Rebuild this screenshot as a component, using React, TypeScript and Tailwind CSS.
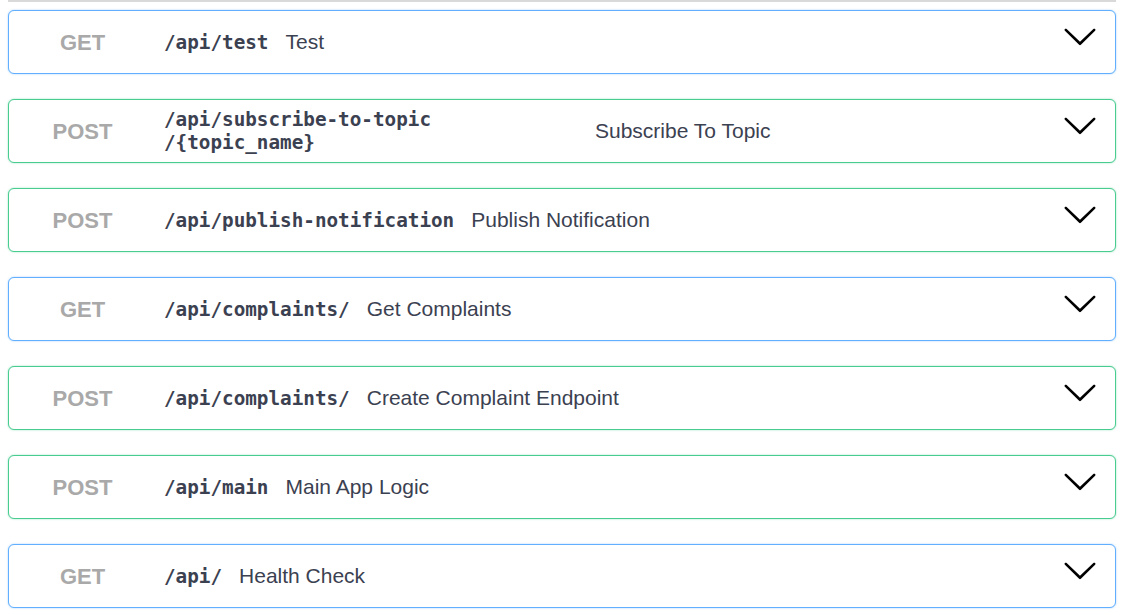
import React from 'react';

// Operation rows as shown in the collapsed API listing
interface Operation {
  method: 'GET' | 'POST';
  path: React.ReactNode;
  summary: string;
  pathWidth?: string;
}

const operations: Operation[] = [
  { method: 'GET', path: '/api/test', summary: 'Test' },
  {
    method: 'POST',
    path: (
      <>
        /api/subscribe-to-topic
        <br />
        /&#123;topic_name&#125;
      </>
    ),
    summary: 'Subscribe To Topic',
    pathWidth: 'w-[422px]',
  },
  { method: 'POST', path: '/api/publish-notification', summary: 'Publish Notification' },
  { method: 'GET', path: '/api/complaints/', summary: 'Get Complaints' },
  { method: 'POST', path: '/api/complaints/', summary: 'Create Complaint Endpoint' },
  { method: 'POST', path: '/api/main', summary: 'Main App Logic' },
  { method: 'GET', path: '/api/', summary: 'Health Check' },
];

const Chevron: React.FC = () => (
  <svg width="36" height="36" viewBox="0 0 20 20" className="shrink-0">
    <path
      fill="#000"
      d="M17.418 6.109c.272-.268.709-.268.979 0s.271.701 0 .969l-7.908 7.83c-.27.268-.707.268-.979 0l-7.908-7.83c-.27-.268-.27-.701 0-.969.271-.268.709-.268.979 0L10 13.25l7.418-7.141z"
    />
  </svg>
);

const OperationRow: React.FC<{ op: Operation }> = ({ op }) => {
  const border =
    op.method === 'GET'
      ? 'border-[#61affe] shadow-[0_0_2px_rgba(97,175,254,0.6)]'
      : 'border-[#49cc90] shadow-[0_0_2px_rgba(73,204,144,0.6)]';
  return (
    <div className={`flex h-[64px] items-center rounded-[6px] border bg-white ${border}`}>
      <span className="w-[147px] shrink-0 text-center font-['Liberation_Sans',Arial,sans-serif] text-[22px] font-bold text-[#a9a9a9]">
        {op.method}
      </span>
      <span
        className={`shrink-0 pl-[8px] font-['DejaVu_Sans_Mono',monospace] text-[19.3px] font-bold leading-[23px] text-[#3b4151] ${op.pathWidth ?? ''}`}
      >
        {op.path}
      </span>
      <span className="ml-[17px] font-['Liberation_Sans',Arial,sans-serif] text-[21px] text-[#3b4151]">
        {op.summary}
      </span>
      <div className="ml-auto mr-[17px] self-start mt-[7px]">
        <Chevron />
      </div>
    </div>
  );
};

export default function App() {
  return (
    <div className="min-h-[615px] bg-white pl-[8px] pr-[11px]">
      <div className="h-[2px] bg-[#d9d9d9]" />
      <div className="mt-[8px] flex flex-col gap-[25px]">
        {operations.map((op, i) => (
          <OperationRow key={i} op={op} />
        ))}
      </div>
    </div>
  );
}
